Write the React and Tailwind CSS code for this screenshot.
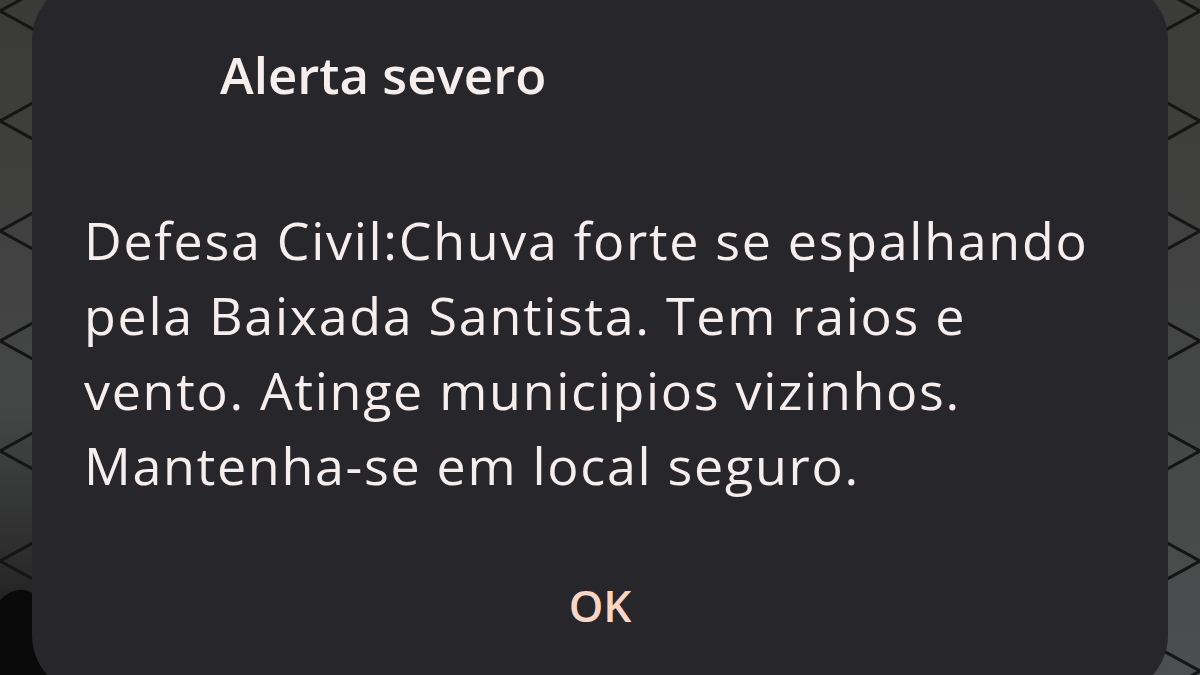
import React from 'react';

const FONT = { fontFamily: '"Open Sans", Lato, sans-serif' };

// chain-link fence behind the dialog
const Fence = () => {
  const lines = [];
  for (let i = -8; i < 16; i++) {
    const y = i * 110;
    lines.push(<line key={'a' + i} x1={-20} y1={y} x2={1220} y2={y + 1240 * 0.55} />);
    lines.push(<line key={'b' + i} x1={-20} y1={y + 1240 * 0.55} x2={1220} y2={y} />);
  }
  return (
    <svg className="absolute inset-0 h-full w-full" viewBox="0 0 1200 675" preserveAspectRatio="none">
      <defs>
        <linearGradient id="bgL" x1="0" y1="0" x2="0" y2="1">
          <stop offset="0" stopColor="#3a3a38" />
          <stop offset="0.6" stopColor="#454646" />
          <stop offset="0.85" stopColor="#2a2a2a" />
          <stop offset="1" stopColor="#0c0c0c" />
        </linearGradient>
        <linearGradient id="bgR" x1="0" y1="0" x2="0" y2="1">
          <stop offset="0" stopColor="#3b3b39" />
          <stop offset="1" stopColor="#4c4f4f" />
        </linearGradient>
      </defs>
      <rect x="0" y="0" width="600" height="675" fill="url(#bgL)" />
      <rect x="600" y="0" width="600" height="675" fill="url(#bgR)" />
      <g stroke="#151515" strokeWidth="3">{lines}</g>
      <path d="M0 600 Q40 560 80 675 L0 675 Z" fill="#0a0a0a" />
    </svg>
  );
};

export default function App() {
  return (
    <div className="relative h-[675px] w-[1200px] overflow-hidden bg-[#3e3e3d]" style={FONT}>
      <Fence />
      <div className="relative mx-[32px] mt-[-20px] h-[715px] rounded-[60px] bg-[#27262a] px-[52px] text-[#f6eeec]">
        <h1 className="pl-[136px] pt-[64px] text-[51px] font-semibold leading-[60px]">Alerta severo</h1>
        <p className="mt-[98px] text-[52px] leading-[75px] tracking-[1.7px]">
          Defesa Civil:Chuva forte se espalhando
          <br />
          pela Baixada Santista. Tem raios e
          <br />
          vento. Atinge municipios vizinhos.
          <br />
          Mantenha-se em local seguro.
        </p>
        <div className="mt-[70px] text-center text-[44px] font-semibold text-[#f7d6c6]">OK</div>
      </div>
    </div>
  );
}
